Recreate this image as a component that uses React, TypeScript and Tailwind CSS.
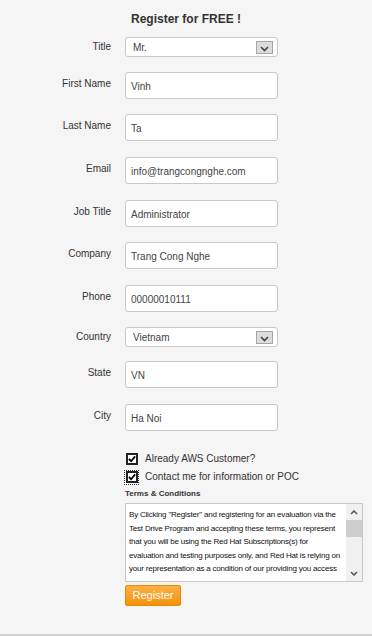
import React from "react";

const font = { fontFamily: '"Liberation Sans", Arial, sans-serif' };

const Chevron = () => (
  <span className="flex h-[13px] w-[17px] items-end justify-center border border-[#a6a6a6] bg-[#dcdcdc]">
    <svg width="9" height="6" viewBox="0 0 9 6" className="mb-[1px]">
      <path d="M1 1 L4.5 4.5 L8 1" fill="none" stroke="#444" strokeWidth="1.6" />
    </svg>
  </span>
);

const SelectRow = ({ label, value, mt }: { label: string; value: string; mt: string }) => (
  <div className={`flex items-start ${mt}`}>
    <label className="w-[111px] pt-[3px] text-right text-[10px] leading-[14px] text-[#333]">{label}</label>
    <div className="ml-[14px] flex h-[20px] w-[153px] items-center justify-between rounded-[3px] border border-[#c8c8c8] bg-white pl-[7px] pr-[4px]">
      <span className="text-[10px] text-[#444]">{value}</span>
      <Chevron />
    </div>
  </div>
);

const InputRow = ({ label, value, mt }: { label: string; value: string; mt: string }) => (
  <div className={`flex items-start ${mt}`}>
    <label className="w-[111px] pt-[5px] text-right text-[10px] leading-[14px] text-[#333]">{label}</label>
    <div className="ml-[14px] flex h-[27px] w-[153px] items-center rounded-[3px] border border-[#c8c8c8] bg-white pl-[5px]">
      <span className="pt-[2px] text-[10px] text-[#444]">{value}</span>
    </div>
  </div>
);

const Check = ({ dotted }: { dotted?: boolean }) => (
  <span className={`flex h-[13px] w-[13px] items-center justify-center ${dotted ? "outline outline-1 outline-dotted outline-[#333]" : ""}`}>
    <span className="flex h-[12px] w-[12px] items-center justify-center border-2 border-[#222] bg-white">
      <svg width="9" height="8" viewBox="0 0 9 8">
        <path d="M1 4 L3.5 6.5 L8 1" fill="none" stroke="#000" strokeWidth="2" />
      </svg>
    </span>
  </span>
);

export default function App() {
  return (
    <div className="h-[636px] w-full border-b-2 border-[#d2d2d2] bg-[#f5f5f5]" style={font}>
      <h1 className="pt-[12px] text-center text-[12px] font-bold leading-[15px] text-[#333]">Register for FREE !</h1>

      <SelectRow label="Title" value="Mr." mt="mt-[10px]" />
      <InputRow label="First Name" value="Vinh" mt="mt-[15px]" />
      <InputRow label="Last Name" value="Ta" mt="mt-[15px]" />
      <InputRow label="Email" value="info@trangcongnghe.com" mt="mt-[16px]" />
      <InputRow label="Job Title" value="Administrator" mt="mt-[16px]" />
      <InputRow label="Company" value="Trang Cong Nghe" mt="mt-[15px]" />
      <InputRow label="Phone" value="00000010111" mt="mt-[16px]" />
      <SelectRow label="Country" value="Vietnam" mt="mt-[15px]" />
      <InputRow label="State" value="VN" mt="mt-[14px]" />
      <InputRow label="City" value="Ha Noi" mt="mt-[16px]" />

      <div className="ml-[125px] mt-[21px] flex flex-col">
        <div className="flex items-center gap-[7px]">
          <Check />
          <span className="text-[10px] leading-[14px] text-[#333]">Already AWS Customer?</span>
        </div>
        <div className="mt-[4px] flex items-center gap-[7px]">
          <Check dotted />
          <span className="text-[10px] leading-[14px] text-[#333]">Contact me for information or POC</span>
        </div>
        <div className="mt-[4px] text-[8px] font-bold leading-[12px] text-[#333]">Terms &amp; Conditions</div>
        <div className="mt-[3px] flex h-[79px] w-[238px] border border-[#c8c8c8] bg-white">
          <p className="flex-1 overflow-hidden pl-[3px] pr-[5px] pt-[4px] text-[8px] leading-[13.5px] tracking-[-0.2px] text-[#111]">
            By Clicking "Register" and registering for an evaluation via the Test Drive Program and accepting these terms, you represent that you will be using the Red Hat Subscriptions(s) for evaluation and testing purposes only, and Red Hat is relying on your representation as a condition of our providing you access
          </p>
          <div className="flex w-[16px] flex-col bg-[#f0f0f0]">
            <div className="flex h-[16px] items-center justify-center">
              <svg width="8" height="5" viewBox="0 0 8 5"><path d="M1 4 L4 1 L7 4" fill="none" stroke="#555" strokeWidth="1.5" /></svg>
            </div>
            <div className="h-[17px] bg-[#cdcdcd]" />
            <div className="flex-1" />
            <div className="flex h-[16px] items-center justify-center">
              <svg width="8" height="5" viewBox="0 0 8 5"><path d="M1 1 L4 4 L7 1" fill="none" stroke="#555" strokeWidth="1.5" /></svg>
            </div>
          </div>
        </div>
        <button className="mt-[3px] h-[21px] w-[56px] rounded-[2px] border border-[#e58a00] bg-gradient-to-b from-[#fbb040] to-[#f39200] text-[11px] text-white">
          Register
        </button>
      </div>
    </div>
  );
}
